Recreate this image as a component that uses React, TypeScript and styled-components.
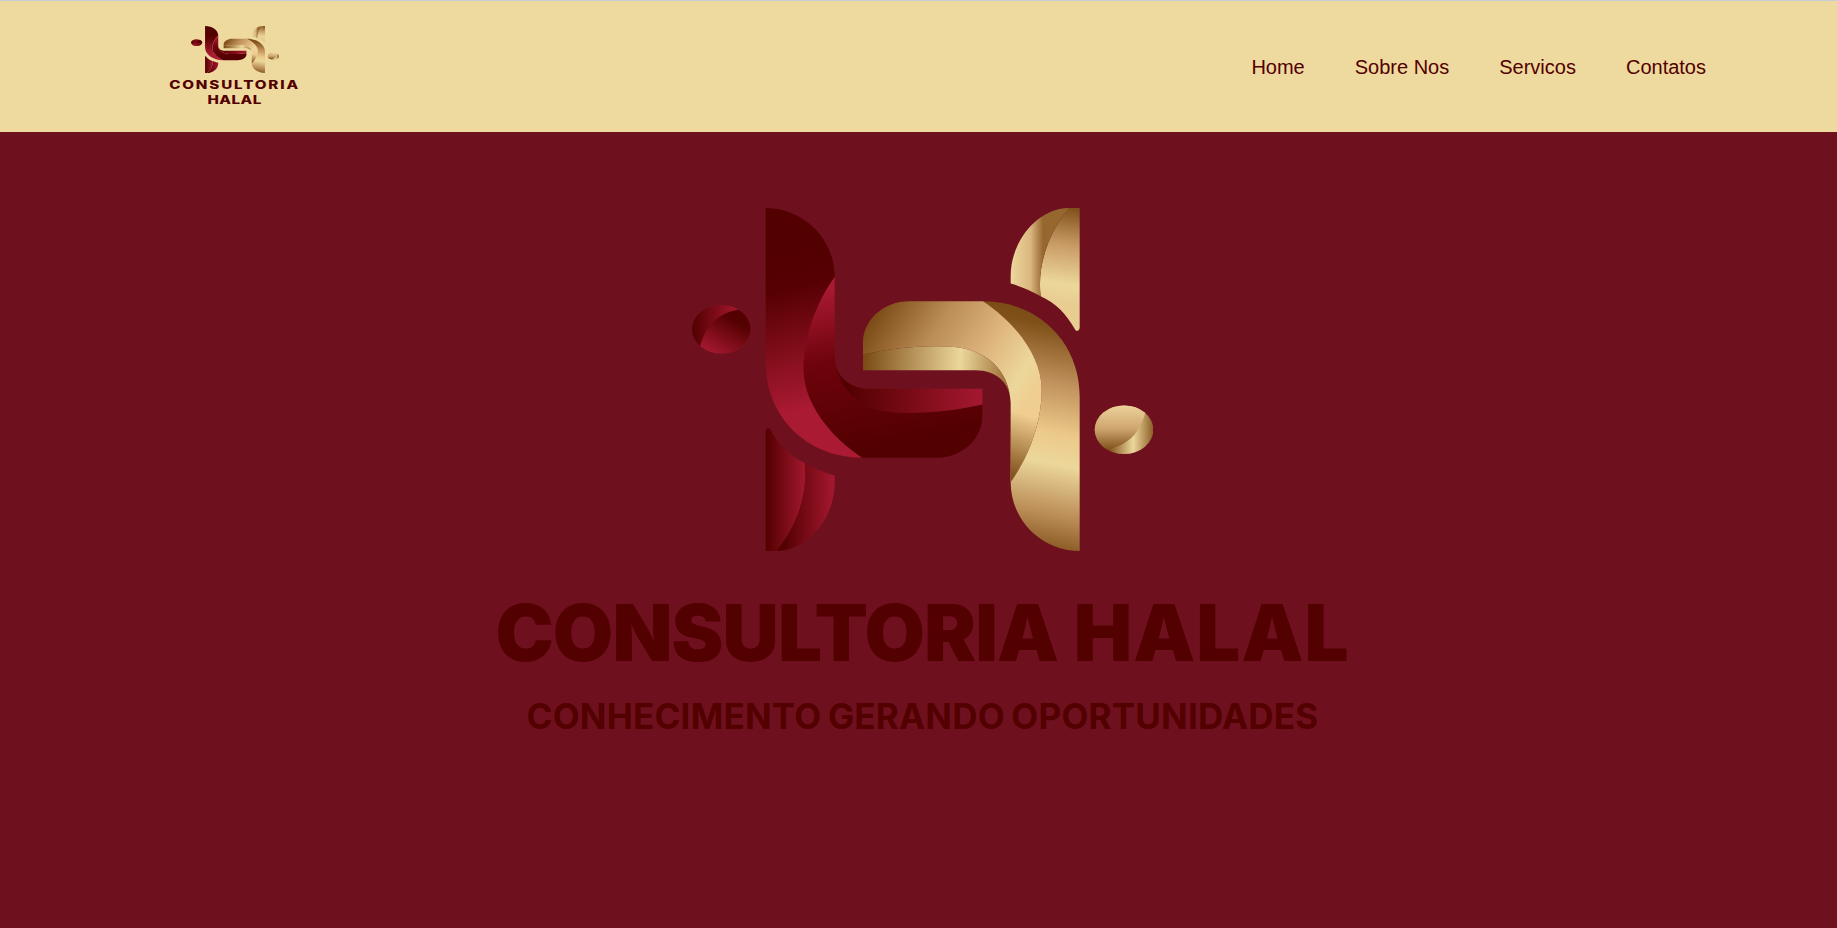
import React from 'react';
import styled, { createGlobalStyle } from 'styled-components';

type LogoMarkProps = {
	prefix: string;
	width: number;
	height: number;
};

const NAV_LINKS = ['Home', 'Sobre Nos', 'Servicos', 'Contatos'];

// the gold half of the mark is the red half turned around this point
const TURN = 'rotate(180 789 570)';

const BODY_LEFT =
	'M318 55C430 55 525 145 525 262C470 340 432 440 432 540C432 640 510 740 608 805C440 805 318 680 318 520Z';
const BODY_RIGHT =
	'M525 262V500C530 600 600 660 700 668C800 675 900 660 968 645V680C968 750 905 805 830 805H608C510 740 432 640 432 540C432 440 470 340 525 262Z';
const BODY_BAND = 'M525 500C525 560 570 598 630 598H968V645C900 660 800 675 700 668C600 660 530 600 525 500Z';
const FOOT_LEFT = 'M318 725Q320 713 330 717C360 770 390 800 435 820C445 900 420 1000 350 1085H318Z';
const FOOT_RIGHT = 'M435 820C465 838 495 850 525 858V880C525 990 440 1085 350 1085C420 1000 445 900 435 820Z';
const DOT_INNER = 'M122 468C140 400 185 368 240 360H290V510H122Z';

const LogoMark = ({ prefix, width, height }: LogoMarkProps) => {
	const id = (name: string) => `${prefix}-${name}`;
	const fill = (name: string) => `url(#${prefix}-${name})`;

	return (
		<svg width={width} height={height} viewBox="97 55 1383 1030" preserveAspectRatio="none" aria-hidden="true">
			<defs>
				<linearGradient id={id('redA')} gradientUnits="userSpaceOnUse" x1="350" y1="180" x2="470" y2="650">
					<stop offset="0" stopColor="#520000" />
					<stop offset="0.25" stopColor="#560002" />
					<stop offset="1" stopColor="#aa1a32" />
				</linearGradient>
				<linearGradient id={id('redB')} gradientUnits="userSpaceOnUse" x1="510" y1="290" x2="600" y2="780">
					<stop offset="0" stopColor="#aa1a32" />
					<stop offset="0.45" stopColor="#6e030c" />
					<stop offset="1" stopColor="#520000" />
				</linearGradient>
				<linearGradient id={id('redBand')} gradientUnits="userSpaceOnUse" x1="560" y1="0" x2="968" y2="0">
					<stop offset="0" stopColor="#520000" />
					<stop offset="1" stopColor="#a5182f" />
				</linearGradient>
				<linearGradient id={id('redFootL')} gradientUnits="userSpaceOnUse" x1="318" y1="0" x2="440" y2="0">
					<stop offset="0" stopColor="#520000" />
					<stop offset="1" stopColor="#a5182f" />
				</linearGradient>
				<linearGradient id={id('redFootR')} gradientUnits="userSpaceOnUse" x1="370" y1="0" x2="525" y2="0">
					<stop offset="0" stopColor="#520000" />
					<stop offset="1" stopColor="#a5182f" />
				</linearGradient>
				<linearGradient id={id('redDot')} gradientUnits="userSpaceOnUse" x1="97" y1="0" x2="235" y2="0">
					<stop offset="0" stopColor="#520000" />
					<stop offset="1" stopColor="#a5182f" />
				</linearGradient>
				<linearGradient id={id('redDotInner')} gradientUnits="userSpaceOnUse" x1="220" y1="370" x2="150" y2="490">
					<stop offset="0.1" stopColor="#520000" />
					<stop offset="1" stopColor="#a5182f" />
				</linearGradient>
				{/* gold gradients are written in page coordinates, so the turn is undone here */}
				<linearGradient id={id('goldA')} gradientUnits="userSpaceOnUse" gradientTransform={TURN} x1="1190" y1="350" x2="1040" y2="1085">
					<stop offset="0" stopColor="#7a4a14" />
					<stop offset="0.08" stopColor="#7f5018" />
					<stop offset="0.3" stopColor="#c0915c" />
					<stop offset="0.5" stopColor="#ecc98a" />
					<stop offset="0.62" stopColor="#ecd79b" />
					<stop offset="0.82" stopColor="#bb8d57" />
					<stop offset="1" stopColor="#7a4a14" />
				</linearGradient>
				<linearGradient id={id('goldB')} gradientUnits="userSpaceOnUse" gradientTransform={TURN} x1="660" y1="340" x2="1120" y2="620">
					<stop offset="0" stopColor="#7a4a14" />
					<stop offset="0.35" stopColor="#bb8d57" />
					<stop offset="0.65" stopColor="#dfb67e" />
					<stop offset="0.88" stopColor="#ecd79b" />
					<stop offset="1" stopColor="#f0cd90" />
				</linearGradient>
				<linearGradient id={id('goldTip')} gradientUnits="userSpaceOnUse" gradientTransform={TURN} x1="1110" y1="680" x2="1052" y2="870">
					<stop offset="0" stopColor="#7a4a14" stopOpacity="0" />
					<stop offset="1" stopColor="#7a4a14" />
				</linearGradient>
				<linearGradient id={id('goldBand')} gradientUnits="userSpaceOnUse" gradientTransform={TURN} x1="610" y1="530" x2="1055" y2="560">
					<stop offset="0" stopColor="#7a4a14" />
					<stop offset="0.65" stopColor="#ecd79b" />
					<stop offset="1" stopColor="#96682f" />
				</linearGradient>
				<linearGradient id={id('goldFootL')} gradientUnits="userSpaceOnUse" gradientTransform={TURN} x1="1230" y1="45" x2="1190" y2="340">
					<stop offset="0" stopColor="#7a4a14" />
					<stop offset="0.4" stopColor="#c79a64" />
					<stop offset="0.8" stopColor="#ecd79b" />
					<stop offset="1" stopColor="#e8cc92" />
				</linearGradient>
				<linearGradient id={id('goldFootR')} gradientUnits="userSpaceOnUse" gradientTransform={TURN} x1="1055" y1="0" x2="1150" y2="0">
					<stop offset="0" stopColor="#ecd79b" />
					<stop offset="0.6" stopColor="#dcb680" />
					<stop offset="1" stopColor="#96682f" />
				</linearGradient>
				<linearGradient id={id('goldDot')} gradientUnits="userSpaceOnUse" gradientTransform={TURN} x1="1345" y1="0" x2="1482" y2="0">
					<stop offset="0" stopColor="#7a4a14" />
					<stop offset="0.55" stopColor="#ecd79b" />
					<stop offset="1" stopColor="#8a5c24" />
				</linearGradient>
				<linearGradient id={id('goldDotInner')} gradientUnits="userSpaceOnUse" gradientTransform={TURN} x1="0" y1="650" x2="0" y2="785">
					<stop offset="0" stopColor="#ecd098" />
					<stop offset="0.5" stopColor="#cfa670" />
					<stop offset="1" stopColor="#7a4a14" />
				</linearGradient>
				<clipPath id={id('dot')}>
					<ellipse cx="185" cy="419" rx="88" ry="73" />
				</clipPath>
			</defs>
			<path d={BODY_LEFT} fill={fill('redA')} />
			<path d={BODY_RIGHT} fill={fill('redB')} />
			<path d={BODY_BAND} fill={fill('redBand')} />
			<path d={FOOT_LEFT} fill={fill('redFootL')} />
			<path d={FOOT_RIGHT} fill={fill('redFootR')} />
			<ellipse cx="185" cy="419" rx="88" ry="73" fill={fill('redDot')} />
			<path d={DOT_INNER} fill={fill('redDotInner')} clipPath={`url(#${id('dot')})`} />
			<g transform={TURN}>
				<path d={BODY_LEFT} fill={fill('goldA')} />
				<path d={BODY_RIGHT} fill={fill('goldB')} />
				<path d={BODY_RIGHT} fill={fill('goldTip')} />
				<path d={BODY_BAND} fill={fill('goldBand')} />
				<path d={FOOT_LEFT} fill={fill('goldFootL')} />
				<path d={FOOT_RIGHT} fill={fill('goldFootR')} />
				<ellipse cx="185" cy="419" rx="88" ry="73" fill={fill('goldDot')} />
				<path d={DOT_INNER} fill={fill('goldDotInner')} clipPath={`url(#${id('dot')})`} />
			</g>
		</svg>
	);
};

const App = () => {
	return (
		<>
			<GlobalStyle />
			<Page>
				<Header>
					<Brand>
						<BrandMark>
							<LogoMark prefix="small" width={88} height={47} />
						</BrandMark>
						<BrandName $spacing={1.4}>CONSULTORIA</BrandName>
						<BrandName $spacing={0.4}>HALAL</BrandName>
					</Brand>
					<Nav>
						{NAV_LINKS.map((link) => (
							<NavLink key={link} href="#">
								{link}
							</NavLink>
						))}
					</Nav>
				</Header>
				<Hero>
					<LogoMark prefix="large" width={461} height={343} />
					<HeroTitle>
						CONSULTORIA <HeroTitleTail>HALAL</HeroTitleTail>
					</HeroTitle>
					<HeroSubtitle>CONHECIMENTO GERANDO OPORTUNIDADES</HeroSubtitle>
				</Hero>
			</Page>
		</>
	);
};

const GlobalStyle = createGlobalStyle`
	html,
	body {
		margin: 0;
		padding: 0;
		height: 100%;
		overflow: hidden;
		background: #6f101f;
		font-family: 'Liberation Sans', Arial, sans-serif;
	}
`;

const Page = styled.div`
	display: flex;
	flex-direction: column;
	height: 928px;
	background: #6f101f;
`;

const Header = styled.header`
	display: flex;
	flex: none;
	align-items: center;
	justify-content: space-between;
	box-sizing: border-box;
	height: 132px;
	padding: 0 131px 0 170px;
	background: #eed99f;
	border-top: 1px solid #c8ccd4;
`;

const Brand = styled.div`
	display: flex;
	flex-direction: column;
	align-items: center;
	width: 129px;
`;

const BrandMark = styled.div`
	display: flex;
	margin-bottom: 5px;
`;

const BrandName = styled.span<{ $spacing: number }>`
	font-family: Inter, 'Liberation Sans', sans-serif;
	font-size: 11.5px;
	font-weight: 800;
	line-height: 15px;
	letter-spacing: ${(props) => props.$spacing}px;
	white-space: nowrap;
	color: #520000;
	transform: scaleX(1.32);
`;

const Nav = styled.nav`
	display: flex;
	gap: 50px;
`;

const NavLink = styled.a`
	font-size: 20px;
	line-height: 24px;
	color: #520000;
	text-decoration: none;
`;

const Hero = styled.main`
	display: flex;
	flex-direction: column;
	align-items: center;
	padding: 76px 0 0 8px;
`;

const HeroTitle = styled.h1`
	margin: 40px 0 0;
	font-family: Inter, 'Liberation Sans', sans-serif;
	font-size: 78px;
	font-weight: 900;
	line-height: 84px;
	letter-spacing: -0.9px;
	word-spacing: 1px;
	white-space: nowrap;
	color: #520000;
`;

const HeroTitleTail = styled.span`
	letter-spacing: 1px;
`;

const HeroSubtitle = styled.h2`
	margin: 20px 0 0;
	font-family: Inter, 'Liberation Sans', sans-serif;
	font-size: 35px;
	font-weight: 700;
	line-height: 42px;
	letter-spacing: 0.2px;
	word-spacing: -2px;
	white-space: nowrap;
	color: #520000;
`;

export default App;
